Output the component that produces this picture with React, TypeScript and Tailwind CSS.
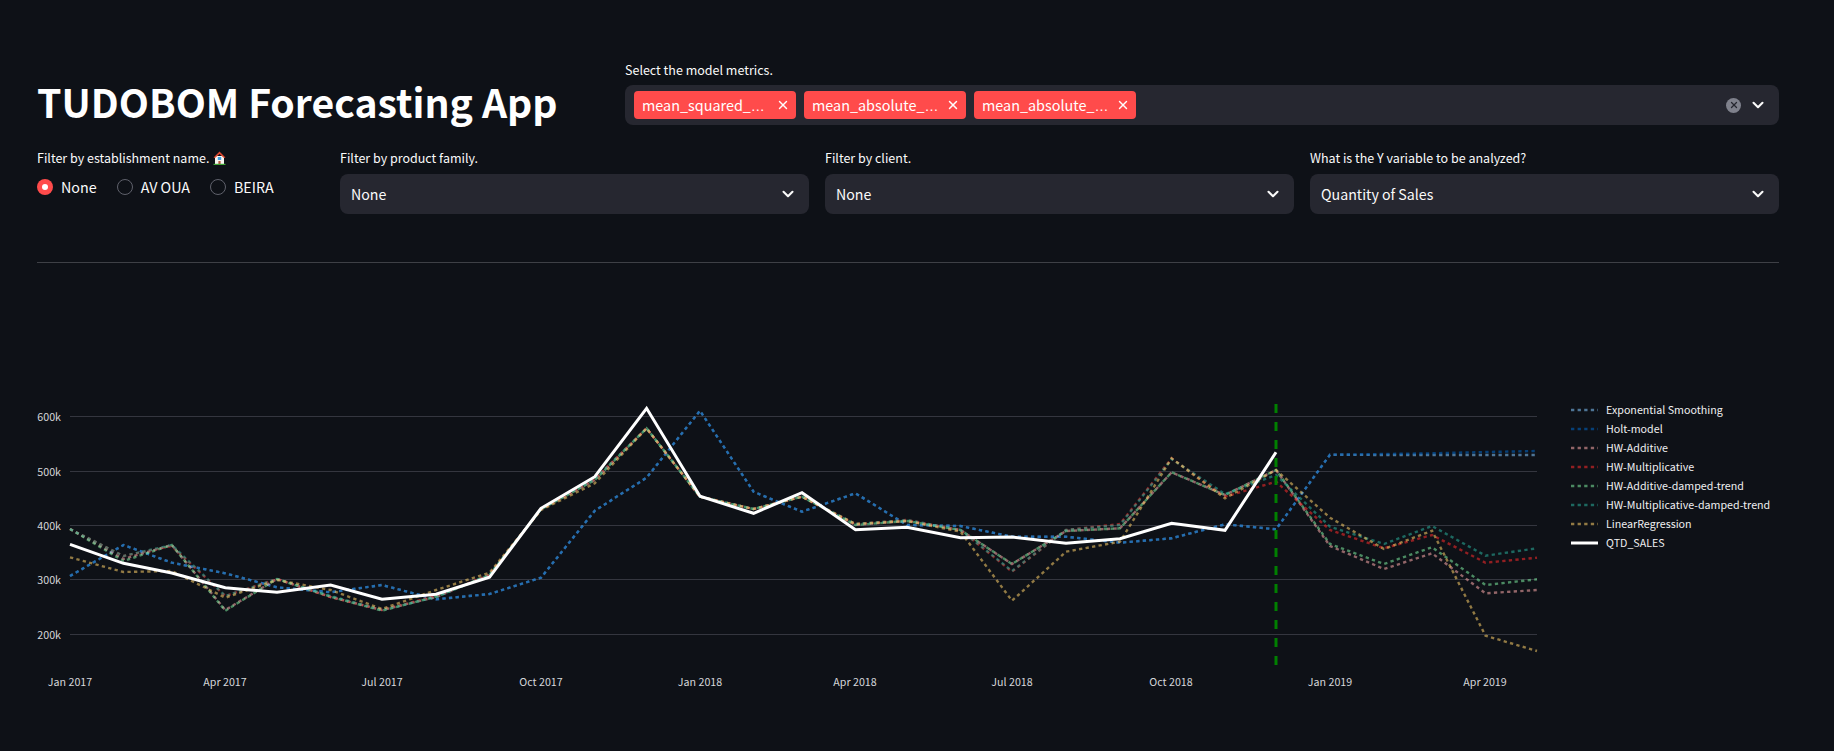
import { ChevronDown, X } from "lucide-react";

const MONTHS = [
  70, 123.5, 171.8, 225.3, 277, 330.6, 382, 436, 489.5, 541, 594.8, 646.6, 700, 753.6, 802, 855.5, 907, 960.5, 1012,
  1066, 1120, 1171.6, 1225, 1276, 1330, 1384, 1432, 1485.5, 1537,
];

const BLUE = [
  576, 545, 562.7, 573.3, 587.3, 592.3, 585, 599.3, 594, 577.7, 510.7, 477.7, 410.7, 491.7, 511.7, 493.3, 525, 526,
  536.7, 536.7, 542.7, 538.3, 524.3, 529.3, 454.7,
];

const SERIES = [
  { name: "Exponential Smoothing", color: "#83c9ff", values: [...BLUE, 455, 455, 455, 455] },
  { name: "Holt-model", color: "#0068c9", values: [...BLUE, 454, 453.3, 452, 451] },
  {
    name: "HW-Additive",
    color: "#ffabab",
    values: [
      529, 559, 545, 610, 579, 597, 610, 597, 575, 509.3, 480, 428.3, 496.7, 509, 496.7, 525, 521, 530, 564, 531, 528.3,
      472.3, 495, 470, 546, 569, 553.3, 593.3, 590,
    ],
  },
  {
    name: "HW-Multiplicative",
    color: "#ff2b2b",
    values: [
      529, 556, 546, 596, 579, 597, 610, 596, 575, 509, 479, 428.3, 496.7, 509, 496.7, 524, 520, 530, 571.7, 530, 524,
      458.3, 496.7, 481.7, 530, 548.3, 535, 562.7, 557.7,
    ],
  },
  {
    name: "HW-Additive-damped-trend",
    color: "#7defa1",
    values: [
      529, 561, 545, 610.7, 579, 596.7, 610.7, 596.7, 575, 509.3, 480, 428.3, 496.7, 509, 496.7, 525, 521, 530, 564, 531,
      528.3, 472.3, 495, 470, 544, 564, 547.3, 585, 579.3,
    ],
  },
  {
    name: "HW-Multiplicative-damped-trend",
    color: "#29b09d",
    values: [
      529, 556, 545, 596, 579, 596, 610, 597, 575, 509, 479, 428.3, 496.7, 509, 496.7, 524, 520, 530, 571, 530, 525, 459,
      494, 475, 526.7, 544, 526, 555.7, 548.3,
    ],
  },
  {
    name: "LinearRegression",
    color: "#ffd16a",
    values: [
      557.3, 572, 571, 597.7, 580, 590, 609, 590, 572.7, 510, 483.3, 428.3, 496.7, 509, 496.7, 524, 521, 531.7, 600.7,
      551.7, 541.7, 458.3, 498.3, 470, 517.7, 549, 530.7, 635.7, 651,
    ],
  },
];

const SALES = [
  544.3, 563.3, 573, 587.7, 592.3, 585, 599.3, 594.3, 577.3, 508.3, 476.7, 408.3, 496.3, 513.3, 492.7, 529.7, 527.3,
  537.7, 537, 543.3, 538.7, 523.3, 530.3, 452.3,
];

const Y_TICKS = [
  { label: "600k", y: 416.5 },
  { label: "500k", y: 471.5 },
  { label: "400k", y: 525.5 },
  { label: "300k", y: 579.5 },
  { label: "200k", y: 634.5 },
];

const X_TICKS = [
  { label: "Jan 2017", x: 70 },
  { label: "Apr 2017", x: 225 },
  { label: "Jul 2017", x: 382 },
  { label: "Oct 2017", x: 541 },
  { label: "Jan 2018", x: 700 },
  { label: "Apr 2018", x: 855 },
  { label: "Jul 2018", x: 1012 },
  { label: "Oct 2018", x: 1171 },
  { label: "Jan 2019", x: 1330 },
  { label: "Apr 2019", x: 1485 },
];

const LEGEND_Y = [410, 429, 448, 467, 486, 505, 524];

function points(values: number[]) {
  return values.map((y, i) => `${MONTHS[i]},${y}`).join(" ");
}

function Tag({ label }: { label: string }) {
  return (
    <div className="flex h-7 w-[162px] items-center rounded bg-[#ff4b4b] pl-2 pr-1.5 text-white">
      <span className="whitespace-nowrap pt-px text-[14.4px] leading-7">
        {label}
        <span className="font-['Liberation_Sans',sans-serif] text-[14px]">…</span>
      </span>
      <X size={14} strokeWidth={2.5} className="ml-auto" />
    </div>
  );
}

function SelectBox({ label, value }: { label: string; value: string }) {
  return (
    <div>
      <p className="mb-1.5 h-5 text-[12.5px] leading-5">{label}</p>
      <div className="flex h-10 items-center justify-between rounded-lg bg-[#262730] pl-[11px] pr-3">
        <span className="text-[14.2px] leading-6">{value}</span>
        <ChevronDown size={18} strokeWidth={2.8} />
      </div>
    </div>
  );
}

function Radio({ label, checked }: { label: string; checked?: boolean }) {
  return (
    <div className="flex items-center gap-2">
      {checked ? (
        <span className="flex size-4 items-center justify-center rounded-full bg-[#ff4b4b]">
          <span className="size-1.5 rounded-full bg-white" />
        </span>
      ) : (
        <span className="size-4 rounded-full border border-[#5f616b]" />
      )}
      <span className="text-[14.3px] leading-6">{label}</span>
    </div>
  );
}

function HouseIcon() {
  return (
    <svg width="13" height="14" viewBox="0 0 13 14" className="ml-1 inline-block align-[-2px]">
      <rect x="2" y="5" width="9" height="8" fill="#f7f5f0" />
      <path d="M6.5 0.5 L0.5 6.5 L2 7 L6.5 3 L11 7 L12.5 6.5 Z" fill="#e0482f" />
      <rect x="4.8" y="6" width="3.4" height="3" fill="#3f9fe0" />
      <rect x="5.4" y="10" width="2.2" height="3" fill="#b5533c" />
      <rect x="0.5" y="12.8" width="12" height="1.2" fill="#3fa535" />
    </svg>
  );
}

export default function App() {
  return (
    <div className="h-[751px] overflow-hidden bg-[#0e1117] pl-[37px] pr-[55px] pt-[60px] font-['Noto_Sans_CJK_SC','Noto_Sans',sans-serif] text-[#fafafa]">
      <div className="grid grid-cols-[572px_1fr] gap-4">
        <h1 className="-mb-[3px] self-end text-[39.2px] font-bold leading-[53px] text-white">TUDOBOM Forecasting App</h1>
        <div>
          <p className="mb-[5px] h-5 text-[12.5px] leading-5">Select the model metrics.</p>
          <div className="flex h-10 items-center gap-2 rounded-lg bg-[#262730] pl-[9px] pr-3">
            <Tag label="mean_squared_" />
            <Tag label="mean_absolute_" />
            <Tag label="mean_absolute_" />
            <span className="ml-auto flex size-[15px] items-center justify-center rounded-full bg-[#7f818c] text-[#262730]">
              <X size={10} strokeWidth={3} />
            </span>
            <ChevronDown size={18} strokeWidth={2.8} />
          </div>
        </div>
      </div>

      <div className="mt-[23px] grid grid-cols-[287px_1fr_1fr_1fr] gap-4">
        <div>
          <p className="mb-[7px] h-5 text-[12.5px] leading-5">
            Filter by establishment name.
            <HouseIcon />
          </p>
          <div className="flex gap-5">
            <Radio label="None" checked />
            <Radio label="AV OUA" />
            <Radio label="BEIRA" />
          </div>
        </div>
        <SelectBox label="Filter by product family." value="None" />
        <SelectBox label="Filter by client." value="None" />
        <SelectBox label="What is the Y variable to be analyzed?" value="Quantity of Sales" />
      </div>

      <hr className="mt-12 border-t border-[#3e4046]" />

      <svg viewBox="37 263 1742 488" className="block h-[488px] w-full text-[10.7px]">
        {Y_TICKS.map((t) => (
          <g key={t.label}>
            <line x1="70" x2="1537" y1={t.y} y2={t.y} stroke="#34363f" strokeWidth="1" />
            <text x="61" y={t.y + 4} textAnchor="end" fill="#d5d6da">
              {t.label}
            </text>
          </g>
        ))}
        {X_TICKS.map((t) => (
          <text key={t.label} x={t.x} y="686" textAnchor="middle" fill="#d5d6da">
            {t.label}
          </text>
        ))}

        {SERIES.map((s) => (
          <polyline
            key={s.name}
            points={points(s.values)}
            fill="none"
            stroke={s.color}
            strokeOpacity="0.55"
            strokeWidth="2.4"
            strokeDasharray="3.3 3.3"
          />
        ))}
        <polyline points={points(SALES)} fill="none" stroke="#ffffff" strokeWidth="3" />
        <line x1="1276" x2="1276" y1="404" y2="665" stroke="#008000" strokeWidth="3" strokeDasharray="9 9" />

        {SERIES.map((s, i) => (
          <g key={s.name}>
            <line
              x1="1571"
              x2="1598"
              y1={LEGEND_Y[i]}
              y2={LEGEND_Y[i]}
              stroke={s.color}
              strokeOpacity="0.55"
              strokeWidth="2.4"
              strokeDasharray="3.3 3.3"
            />
            <text x="1606" y={LEGEND_Y[i] + 4} fill="#f0f0f2">
              {s.name}
            </text>
          </g>
        ))}
        <line x1="1571" x2="1598" y1="543" y2="543" stroke="#ffffff" strokeWidth="3" />
        <text x="1606" y="547" fill="#f0f0f2">
          QTD_SALES
        </text>
      </svg>
    </div>
  );
}
